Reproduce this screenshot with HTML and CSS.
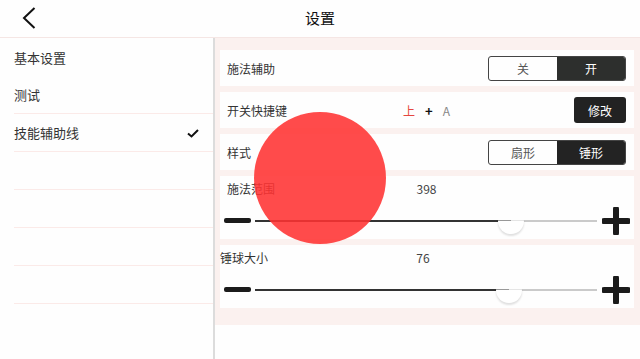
FILE: index.html
```html
<!DOCTYPE html>
<html lang="zh">
<head>
  <meta charset="UTF-8">
  <meta name="viewport" content="width=device-width, initial-scale=1.0">
  <title>设置</title>
  <link rel="stylesheet" href="styles.css">
</head>
<body>
  <header class="topbar">
    <div class="back">
      <svg viewBox="0 0 14 22" width="14" height="22">
        <path d="M12.5 1 L2 11 L12.5 21" fill="none" stroke="#111" stroke-width="2"/>
      </svg>
    </div>
    <div class="title">设置</div>
    <div></div>
  </header>

  <div class="layout">
    <nav class="sidebar">
      <div class="nav-item">基本设置</div>
      <div class="nav-item lined">测试</div>
      <div class="nav-item lined">技能辅助线
        <svg class="check" viewBox="0 0 12 9" width="12" height="9">
          <path d="M1 4.5 L4.5 7.5 L11 1" fill="none" stroke="#111" stroke-width="2"/>
        </svg>
      </div>
      <div class="nav-item lined"></div>
      <div class="nav-item lined"></div>
      <div class="nav-item lined"></div>
      <div class="nav-item lined"></div>
    </nav>

    <section class="content">
      <div class="panel">
        <div class="card row">
          <span class="label">施法辅助</span>
          <span></span>
          <div class="segment">
            <span class="seg">关</span>
            <span class="seg on">开</span>
          </div>
        </div>

        <div class="card row">
          <span class="label">开关快捷键</span>
          <span class="hotkey"><span class="key-red">上</span><span class="key-plus">+</span><span class="key-a">A</span></span>
          <button class="btn">修改</button>
        </div>

        <div class="card row">
          <span class="label">样式</span>
          <span></span>
          <div class="segment">
            <span class="seg">扇形</span>
            <span class="seg on dark">锤形</span>
          </div>
        </div>

        <div class="card slider-card">
          <div class="head">
            <span class="label">施法范围</span>
            <span class="value">398</span>
            <span></span>
          </div>
          <div class="slider">
            <span class="minus"></span>
            <div class="track">
              <div class="fill" style="width: 74.9%"></div>
              <div class="thumb" style="left: 74.9%"></div>
            </div>
            <svg class="plus" viewBox="0 0 28 28" width="28" height="28">
              <path d="M14 2 V26 M2 14 H26" stroke="#1b1b1b" stroke-width="6" stroke-linecap="round"/>
            </svg>
          </div>
        </div>

        <div class="card slider-card">
          <div class="head flush">
            <span class="label">锤球大小</span>
            <span class="value">76</span>
            <span></span>
          </div>
          <div class="slider">
            <span class="minus"></span>
            <div class="track">
              <div class="fill" style="width: 74.3%"></div>
              <div class="thumb" style="left: 74.3%"></div>
            </div>
            <svg class="plus" viewBox="0 0 28 28" width="28" height="28">
              <path d="M14 2 V26 M2 14 H26" stroke="#1b1b1b" stroke-width="6" stroke-linecap="round"/>
            </svg>
          </div>
        </div>
      </div>
    </section>
  </div>

  <div class="joystick"></div>
</body>
</html>
```

FILE: styles.css
```css
:root {
  --text: #333333;
  --pink: #fbf1ef;
  --line: #fbeae8;
  --dark: #2a2c2a;
}

* {
  margin: 0;
  padding: 0;
  box-sizing: border-box;
}

body {
  font-family: "Noto Sans CJK SC", "Noto Sans", sans-serif;
  color: var(--text);
  background: #fefefe;
  width: 640px;
  height: 359px;
  overflow: hidden;
  display: flex;
  flex-direction: column;
}

.topbar {
  height: 38px;
  flex: none;
  display: grid;
  grid-template-columns: 1fr auto 1fr;
  align-items: center;
  border-bottom: 1px solid #f5e6e4;
  padding-bottom: 2px;
}

.back {
  padding-left: 22px;
  display: flex;
  align-items: center;
}

.title {
  font-size: 15px;
  color: #111;
}

.layout {
  flex: 1;
  display: flex;
}

.sidebar {
  width: 215px;
  border-right: 2px solid #dcdcdc;
  font-size: 13px;
}

.nav-item {
  height: 38px;
  margin-left: 14px;
  padding-right: 14px;
  display: flex;
  align-items: center;
  justify-content: space-between;
}

.nav-item.lined {
  border-bottom: 1px solid var(--line);
}

.check {
  margin-top: 2px;
}

.content {
  flex: 1;
}

.panel {
  background: var(--pink);
  padding: 12px 6px 17px 5px;
  display: flex;
  flex-direction: column;
  gap: 6px;
}

.card {
  background: #fefefe;
  font-size: 12px;
}

.row {
  height: 36px;
  display: grid;
  grid-template-columns: 1fr auto 1fr;
  align-items: center;
  padding: 0 8px 0 7px;
}

.row > :last-child {
  justify-self: end;
}

.segment {
  width: 138px;
  height: 25px;
  display: flex;
  border: 1px solid #444;
  border-radius: 3px;
  overflow: hidden;
}

.seg {
  flex: 1;
  display: flex;
  align-items: center;
  justify-content: center;
  color: #555;
}

.seg.on {
  background: #2d2f2d;
  color: #fff;
}

.seg.dark {
  background: #232323;
}

.hotkey {
  display: flex;
  align-items: center;
  gap: 10px;
}

.key-red {
  color: #e5463f;
}

.key-plus {
  font-weight: bold;
  color: #111;
  font-size: 13px;
}

.key-a {
  color: #888;
}

.btn {
  width: 52px;
  height: 26px;
  border: none;
  border-radius: 3px;
  background: #222;
  color: #fff;
  font-family: inherit;
  font-size: 12px;
}

.slider-card {
  padding: 6px 4px 5px 0;
}

.head {
  display: grid;
  grid-template-columns: 1fr auto 1fr;
  line-height: 14px;
  padding-left: 7px;
  padding-right: 4px;
}

.head.flush {
  padding-left: 0;
}

.value {
  color: #444;
}

.slider {
  height: 27px;
  margin-top: 11px;
  display: flex;
  align-items: center;
  padding-left: 4px;
}

.minus {
  width: 27px;
  height: 5px;
  border-radius: 2px;
  background: #1b1b1b;
}

.track {
  position: relative;
  flex: 1;
  height: 2px;
  margin: 0 4px;
  background: #cacaca;
}

.fill {
  height: 2px;
  background: #333;
}

.thumb {
  position: absolute;
  top: -12px;
  width: 26px;
  height: 26px;
  margin-left: -13px;
  border-radius: 50%;
  background: #fff;
  box-shadow: 0 2px 2px rgba(0, 0, 0, 0.12);
  clip-path: inset(13px -4px -4px -4px);
}

.plus {
  flex: none;
  margin-left: 1px;
}

.joystick {
  position: absolute;
  left: 254px;
  top: 112px;
  width: 132px;
  height: 132px;
  border-radius: 50%;
  background: rgb(255, 50, 50);
  opacity: 0.88;
}
```
